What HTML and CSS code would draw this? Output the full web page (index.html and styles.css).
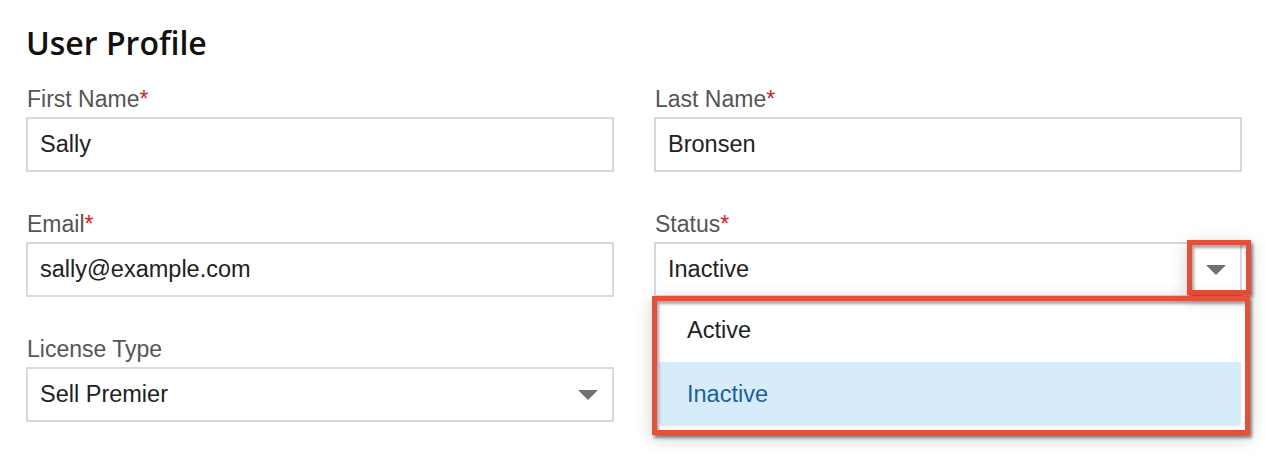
FILE: index.html
```html
<!DOCTYPE html>
<html lang="en">
<head>
<meta charset="utf-8">
<title>User Profile</title>
<link rel="stylesheet" href="styles.css">
</head>
<body>
<main class="profile">
  <h1 class="profile-title">User Profile</h1>
  <div class="form-grid">
    <div class="field">
      <label class="field-label">First Name<span class="req">*</span></label>
      <div class="input">Sally</div>
    </div>
    <div class="field">
      <label class="field-label">Last Name<span class="req">*</span></label>
      <div class="input">Bronsen</div>
    </div>
    <div class="field">
      <label class="field-label">Email<span class="req">*</span></label>
      <div class="input">sally@example.com</div>
    </div>
    <div class="field">
      <label class="field-label">Status<span class="req">*</span></label>
      <div class="input select is-open">
        <span>Inactive</span>
        <span class="caret"></span>
        <ul class="options">
          <li class="option">Active</li>
          <li class="option is-selected">Inactive</li>
        </ul>
        <div class="callout callout-caret"></div>
        <div class="callout callout-list"></div>
      </div>
    </div>
    <div class="field">
      <label class="field-label">License Type</label>
      <div class="input select">
        <span>Sell Premier</span>
        <span class="caret"></span>
      </div>
    </div>
  </div>
</main>
</body>
</html>
```

FILE: styles.css
```css
* {
  box-sizing: border-box;
}

html, body {
  margin: 0;
  background: #ffffff;
}

body {
  min-height: 100vh;
}

.profile {
  min-height: 466px;
  padding: 23px 0 0 26px;
  font-family: "Liberation Sans", Arial, sans-serif;
}

.profile-title {
  margin: 0 0 23px 0;
  font-family: "Open Sans", "Liberation Sans", sans-serif;
  font-weight: 600;
  font-size: 32px;
  line-height: 40px;
  color: #111111;
}

.form-grid {
  display: grid;
  grid-template-columns: 588px 588px;
  column-gap: 40px;
  row-gap: 39px;
}

.field {
  display: flex;
  flex-direction: column;
}

.field-label {
  display: block;
  margin: 0 0 5px 1px;
  font-size: 23px;
  line-height: 26px;
  color: #555555;
}

.req {
  color: #e0201c;
}

.input {
  position: relative;
  display: flex;
  align-items: center;
  height: 55px;
  padding: 0 12px;
  border: 2px solid #d4d9e2;
  background: #ffffff;
  font-size: 23.5px;
  color: #222222;
}

.select {
  justify-content: space-between;
}

.caret {
  width: 0;
  height: 0;
  margin-right: 2px;
  border-left: 10px solid transparent;
  border-right: 10px solid transparent;
  border-top: 10px solid #717171;
}

/* open dropdown list under the status select */
.options {
  position: absolute;
  top: 54px;
  left: 3px;
  right: -1px;
  margin: 0;
  padding: 0;
  list-style: none;
  background: #ffffff;
  border-radius: 0 0 4px 4px;
  overflow: hidden;
}

.option {
  height: 64px;
  display: flex;
  align-items: center;
  padding-left: 28px;
  font-size: 23.5px;
  color: #222222;
}

.option.is-selected {
  background: #d6ecfb;
  color: #1c5f9f;
}

/* red highlight frames */
.callout {
  position: absolute;
  border: 5px solid #e5503a;
  box-shadow: 2px 3px 3px rgba(0, 0, 0, 0.45),
              0 4px 16px rgba(0, 0, 0, 0.18),
              inset 2px 3px 3px rgba(0, 0, 0, 0.35);
  pointer-events: none;
}

.callout-caret {
  top: -4px;
  left: 531px;
  width: 64px;
  height: 55px;
}

.callout-list {
  top: 52px;
  left: -4px;
  width: 598px;
  height: 139px;
}
```
